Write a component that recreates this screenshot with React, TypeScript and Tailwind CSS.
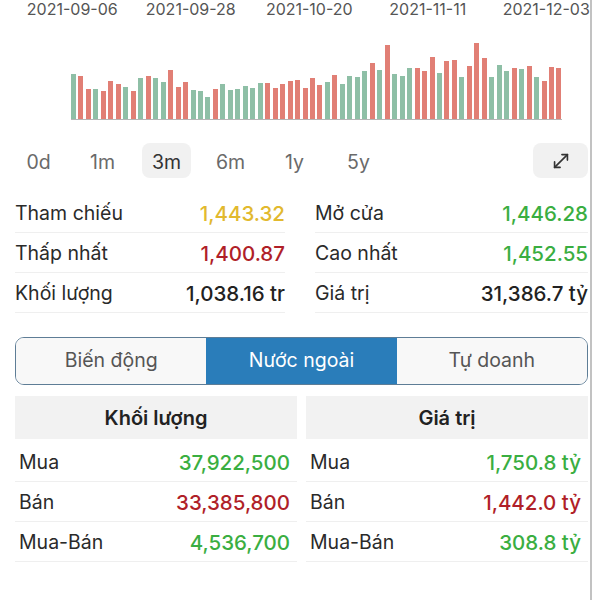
import React from 'react';
import { MoveDiagonal } from 'lucide-react';

const dates = ['2021-09-06', '2021-09-28', '2021-10-20', '2021-11-11', '2021-12-03'];

// [height, up]
const bars: [number, boolean][] = [
  [45, true], [43, false], [30, false], [30, true], [28, false], [38, false], [35, false], [32, true],
  [28, false], [41, true], [43, false], [41, true], [37, true], [49, false], [32, false], [37, false],
  [29, true], [28, true], [22, true], [30, false], [35, true], [29, true], [30, true], [33, true],
  [31, true], [36, true], [36, false], [31, false], [35, false], [38, false], [39, false], [31, false],
  [41, false], [34, false], [37, true], [44, false], [35, true], [43, true], [42, true], [48, true],
  [56, false], [49, true], [74, false], [45, true], [43, true], [51, true], [51, false], [48, false],
  [62, false], [46, true], [58, false], [59, false], [42, true], [53, false], [76, false], [61, false],
  [42, true], [54, true], [48, true], [51, false], [50, true], [53, false], [42, true], [38, false],
  [52, false], [51, false],
];

const periods = ['0d', '1m', '3m', '6m', '1y', '5y'];

const stats = [
  [
    { label: 'Tham chiếu', value: '1,443.32', color: 'text-[#e2b92e]' },
    { label: 'Thấp nhất', value: '1,400.87', color: 'text-[#b01f28]' },
    { label: 'Khối lượng', value: '1,038.16 tr', color: 'text-[#222222]' },
  ],
  [
    { label: 'Mở cửa', value: '1,446.28', color: 'text-[#3aae41]' },
    { label: 'Cao nhất', value: '1,452.55', color: 'text-[#3aae41]' },
    { label: 'Giá trị', value: '31,386.7 tỷ', color: 'text-[#222222]' },
  ],
];

const tables = [
  {
    title: 'Khối lượng',
    rows: [
      { label: 'Mua', value: '37,922,500', color: 'text-[#3aae41]' },
      { label: 'Bán', value: '33,385,800', color: 'text-[#b01f28]' },
      { label: 'Mua-Bán', value: '4,536,700', color: 'text-[#3aae41]' },
    ],
  },
  {
    title: 'Giá trị',
    rows: [
      { label: 'Mua', value: '1,750.8 tỷ', color: 'text-[#3aae41]' },
      { label: 'Bán', value: '1,442.0 tỷ', color: 'text-[#b01f28]' },
      { label: 'Mua-Bán', value: '308.8 tỷ', color: 'text-[#3aae41]' },
    ],
  },
];

export default function App() {
  return (
    <div className="w-[600px] h-[600px] bg-white flex overflow-hidden font-['Inter','Liberation_Sans',sans-serif]">
      <div className="w-[590px] h-full overflow-hidden flex flex-col">
        {/* dates */}
        <div className="flex pl-[13px] h-[18px] text-[16px] leading-[18px] text-[#555555]">
          {dates.map((d) => (
            <div key={d} className="w-[118.5px] shrink-0 text-center">{d}</div>
          ))}
        </div>

        {/* volume chart */}
        <div className="pl-[71px]">
          <div className="w-[491px] h-[102px] flex items-end justify-between border-b border-[#b5b5b5]">
            {bars.map(([h, up], i) => (
              <div
                key={i}
                className={up ? 'w-[5px] bg-[#8ebfa6]' : 'w-[5px] bg-[#e17f75]'}
                style={{ height: h }}
              />
            ))}
          </div>
        </div>

        {/* periods */}
        <div className="flex items-center mt-[23px] h-[35px] pl-[14px] pr-[2px]">
          <div className="flex gap-[15px]">
            {periods.map((p) => (
              <div
                key={p}
                className={
                  p === '3m'
                    ? 'w-[49px] h-[35px] pt-[4px] rounded-[8px] bg-[#f1f1f1] flex items-center justify-center text-[19.5px] text-[#333333]'
                    : 'w-[49px] h-[35px] pt-[4px] rounded-[8px] flex items-center justify-center text-[19.5px] text-[#6a6a6a]'
                }
              >
                {p}
              </div>
            ))}
          </div>
          <button className="ml-auto w-[55px] h-[35px] rounded-[8px] bg-[#f1f1f1] flex items-center justify-center text-[#333333]">
            <MoveDiagonal size={22} strokeWidth={1.8} />
          </button>
        </div>

        {/* stats */}
        <div className="flex gap-[30px] pl-[15px] mt-[15px]">
          {stats.map((col, ci) => (
            <div key={ci} className={ci === 0 ? 'w-[270px]' : 'w-[273px]'}>
              {col.map((s) => (
                <div key={s.label} className="h-[40px] pt-[3px] flex items-center justify-between border-b border-[#efefef]">
                  <span className="text-[19.5px] text-[#2a2a2a]">{s.label}</span>
                  <span className={`text-[20.5px] font-medium ${s.color}`}>{s.value}</span>
                </div>
              ))}
            </div>
          ))}
        </div>

        {/* segmented control */}
        <div className="ml-[15px] mt-[24px] w-[573px] h-[48px] flex rounded-[9px] border-[1.5px] border-[#5e7d96] overflow-hidden text-[19.5px]">
          <div className="flex-1 bg-[#f8f8f8] text-[#555555] flex items-center justify-center">Biến động</div>
          <div className="flex-1 bg-[#2a7dba] text-white flex items-center justify-center">Nước ngoài</div>
          <div className="flex-1 bg-[#f8f8f8] text-[#555555] flex items-center justify-center">Tự doanh</div>
        </div>

        {/* foreign trading tables */}
        <div className="flex gap-[9px] pl-[15px] mt-[11px]">
          {tables.map((t) => (
            <div key={t.title} className="w-[282px]">
              <div className="h-[43px] bg-[#f2f2f2] flex items-center justify-center text-[20px] font-semibold text-[#222222]">
                {t.title}
              </div>
              <div className="mt-[3px]">
                {t.rows.map((r) => (
                  <div key={r.label} className="h-[40px] pt-[3px] pl-[4px] pr-[7px] flex items-center justify-between border-b border-[#efefef]">
                    <span className="text-[19.5px] text-[#2a2a2a]">{r.label}</span>
                    <span className={`text-[20.5px] font-medium ${r.color}`}>{r.value}</span>
                  </div>
                ))}
              </div>
            </div>
          ))}
        </div>
      </div>
      <div className="w-[2px] h-full bg-[#c2c2c2]" />
    </div>
  );
}
